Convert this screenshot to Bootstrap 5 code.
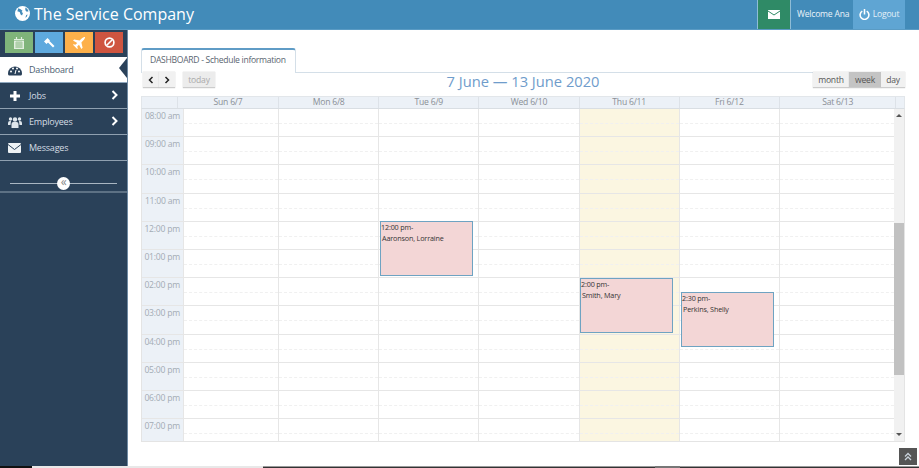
<!DOCTYPE html>
<html lang="en">
<head>
<meta charset="utf-8">
<title>The Service Company</title>
<link rel="stylesheet" href="https://cdn.jsdelivr.net/npm/bootstrap@5.3.0/dist/css/bootstrap.min.css">
<style>
html,body{height:100%;margin:0;overflow:hidden}
body{font-family:"Open Sans",sans-serif;background:#fff;color:#555;font-size:8.6px;letter-spacing:-.22px}
.shell{height:468px;position:relative}
.topbar{height:30px;background:#428bb9;border-bottom:1px solid #5a9bc4;color:#fff}
.brand{font-size:16px;line-height:29px;padding-left:15px;color:#fff;letter-spacing:0}
.brand svg{width:15px;height:15px;margin-right:4px;vertical-align:-1px}
.msgcell{width:34px;height:29px;background:#2f8a66;border-left:1px solid #8fbcd6;border-right:1px solid #8fbcd6}
.welcome{padding:0 6px;width:62px;white-space:nowrap;color:#eaf3f9}
.logout{width:52px;height:29px;background:#5fa5d3;gap:3px;color:#e4f0f8}
.endcell{width:14px}
.main{height:438px}
.side{width:128px;background:#2a4159;border-right:1px solid #6f8aa3;color:#dfe6ec;flex:none;height:436px}
.quick{height:27px;padding:2px 5px 0 5px;gap:2px}
.quick span{width:28px;height:21px;flex:none}
.q1{background:#7fb47a}.q2{background:#5ea9de}.q3{background:#fdb04a}.q4{background:#cf5540}
.mitem{height:26px;font-size:9px;border-bottom:1px solid #8fa0b0;padding:0 0 0 8px;position:relative;color:#d5dde4}
.mitem svg.ic{width:14px;height:14px;margin-right:7px;flex:none}
.mitem.on{background:#fff;color:#4a5d70;border-bottom:1px solid #8fa8bf}
.mitem.on::after{content:"";position:absolute;right:0;top:1px;border-style:solid;border-width:10px 8px 10px 0;border-color:transparent #2a4159 transparent transparent}
.chev{position:absolute;right:9px;top:7px;width:7px;height:10px}
.slidewrap{height:32px;border-bottom:2px solid #5d7184;position:relative}
.slidewrap i{position:absolute;left:10px;right:10px;top:22px;height:1px;background:#a9b6c2;display:block}
.knob{position:absolute;left:57px;top:16px;width:13px;height:13px;border-radius:50%;background:#fff;color:#888;font-size:12px;line-height:10px;text-align:center}
.work{flex:1;padding:18px 14px 0 13px;min-width:0}
.tabline{height:25px;border-bottom:1px solid #d4dfe8}
.tabhead{height:25px;width:155px;border:1px solid #d4dfe8;border-top:2px solid #5f9cc6;border-bottom:0;background:#fff;border-radius:3px 3px 0 0;line-height:21px;padding-left:8px;color:#5a6570;white-space:nowrap;position:relative;letter-spacing:-.3px}
.toolbar{height:24px;position:relative;margin:-1px 0 0 2px}
.fcbtn{height:16px;background:#f1f1f1;border:0;border-bottom:1px solid #ccc;box-shadow:0 0 1px #bbb;font-size:8.600px;letter-spacing:-.22px;color:#555;padding:0;line-height:14px;flex:none}
.fcbtn.arrow{width:16px}
.fcbtn.dis{color:#aaa;background:#ececec;width:32px;margin-left:8px}
.fcbtn.act{background:#c4c4c4}
.b-month{width:36px}.b-week{width:32px}.b-day{width:24px}
.fctitle{position:absolute;left:-2px;right:0;top:-1px;text-align:center;font-size:14.7px;line-height:20px;color:#6f9ccb;letter-spacing:0}
.fchead{height:13px;background:#ecf1f7;border:1px solid #e2e6ea;border-bottom:1px solid #d9dee3;color:#8a8f96;line-height:11px}
.fchead div{border-left:1px solid #dde2e8;text-align:center;width:100.2px;flex:none}
.fchead .hd0{width:35px;border-left:0}
.fchead .hd1{width:101px}
.fchead .hd7{width:116.500px}
.fchead .hdlast{width:auto;flex:1}
.fcbody{height:333px;overflow:hidden;position:relative;border:1px solid #e4e4e4;border-top:0}
.hourrow{display:flex;height:28.2px;border-bottom:1px solid #e6e6e6}
.axis{width:41px;flex:none;background:#ecf1f7;color:#a3abb4;text-align:right;padding-right:3px;line-height:14px;white-space:nowrap}
.cell{width:100.2px;flex:none;border-left:1px solid #e6e6e6;position:relative}
.cell.first{width:95px}
.cell::after{content:"";position:absolute;left:0;right:0;top:14px;border-top:1px dashed #f0f0f0}
.cell.today{background:#fbf6e1}
.cell.tail{width:auto;flex:1}
.evt{position:absolute;background:#f3d6d6;border:1px solid #6ea3c2;color:#333;font-size:7.200px;letter-spacing:-.15px;line-height:10px;padding:0;width:93px;height:55px;white-space:nowrap}
.evt span{display:block}
.evt span+span{padding:1px 0 0 1px}
.sbar{position:absolute;right:0;top:0;bottom:0;width:10px;background:#f1f1f1}
.sbar b{position:absolute;left:0;right:0;top:114px;height:152px;background:#c1c1c1}
.sbar u{position:absolute;left:2px;width:0;height:0;border-style:solid;border-color:transparent}
.sup{top:5px;border-width:0 3px 3px 3px;border-bottom-color:#555!important}
.sdn{bottom:5px;border-width:3px 3px 0 3px;border-top-color:#555!important}
.gotop{position:absolute;right:2px;bottom:3px;width:18px;height:17px;background:#555}
.strip{position:absolute;left:0;right:0;bottom:0;height:2px;background:#333;border-top:1px solid #999}
.seg-a{width:32px;background:#111}
.seg-b{width:231px;background:#e8e8e8}
.seg-c{width:392px}
.seg-d{width:25px;background:#777}
.strip div{height:2px;margin-top:-1px}
</style>
</head>
<body>
<div class="shell">
  <header class="topbar d-flex align-items-center justify-content-between">
    <div class="brand">
      <svg viewBox="0 0 16 16"><circle cx="8" cy="8" r="8" fill="#fff"/><path d="M3.500 2.500l2.500 1 2 1.500-1 1.500 1.500 1-1 2.500-1.500-1-1-2.500-2.500-1zM11 1.500l2 1.500 1.500 2.500-2 .5-1.500-1.500zM12 9.500l1.500-.5-1 2.500-1.500 1z" fill="#428bb9"/></svg>The Service Company
    </div>
    <div class="d-flex align-items-center">
      <div class="msgcell d-flex align-items-center justify-content-center">
        <svg width="12" height="9" viewBox="0 0 12 9"><rect width="12" height="9" fill="#fff"/><path d="M0 1l6 4 6-4" fill="none" stroke="#2f8a66" stroke-width="1"/></svg>
      </div>
      <div class="welcome">Welcome Ana</div>
      <div class="logout d-flex align-items-center justify-content-center">
        <svg width="11" height="11" viewBox="0 0 10 10"><path d="M3 2a4 4 0 1 0 4 0" fill="none" stroke="#fff" stroke-width="1.400"/><path d="M5 0v5" stroke="#fff" stroke-width="1.400"/></svg><span>Logout</span>
      </div>
      <div class="endcell"></div>
    </div>
  </header>
  <div class="main d-flex">
    <nav class="side">
      <div class="quick d-flex">
        <span class="q1 d-flex align-items-center justify-content-center"><svg width="10" height="12" viewBox="0 0 10 12"><path d="M0 2h10v10H0z" fill="#e2efe0"/><path d="M2.500 0v3M7.500 0v3" stroke="#e2efe0" stroke-width="1.200"/><path d="M0 3.500h10M1 6h8M1 8h8M1 10h8M3 4v7M5 4v7M7 4v7" stroke="#7fb47a" stroke-width=".6"/></svg></span>
        <span class="q2 d-flex align-items-center justify-content-center"><svg width="12" height="12" viewBox="0 0 12 12"><path d="M1 4.500l3.500-3.500 2.500 2.500L3.500 7zM5 5.500l1.500-1.500 5 5-1.500 1.500z" fill="#fff"/></svg></span>
        <span class="q3 d-flex align-items-center justify-content-center"><svg width="12" height="12" viewBox="0 0 10 10"><path d="M10 0c-1 0-2 .5-3 1.500L5.500 3 1 2 0 3l3.500 2L2 6.500 .5 6 0 6.500 1.500 8 3.500 10 4 9.500 3.500 8 5 6.500 7 10l1-1-1-4.500L8.500 3C9.500 2 10 1 10 0z" fill="#fff"/></svg></span>
        <span class="q4 d-flex align-items-center justify-content-center"><svg width="11" height="11" viewBox="0 0 10 10"><circle cx="5" cy="5" r="4" fill="none" stroke="#fff" stroke-width="1.500"/><path d="M2.500 7.500l5-5" stroke="#fff" stroke-width="1.500"/></svg></span>
      </div>
      <div class="mitem on d-flex align-items-center">
        <svg class="ic" viewBox="0 0 14 14"><path d="M0 10.500a7 7 0 0 1 14 0c0 1-.5 2-1 2H1c-.5 0-1-1-1-2z" fill="#2a4159"/><circle cx="3" cy="8.500" r="1" fill="#fff"/><circle cx="5" cy="5.500" r="1" fill="#fff"/><circle cx="9" cy="5.500" r="1" fill="#fff"/><circle cx="11" cy="8.500" r="1" fill="#fff"/><path d="M7 11l1-4" stroke="#fff"/></svg>Dashboard
      </div>
      <div class="mitem d-flex align-items-center">
        <svg class="ic" viewBox="0 0 14 14"><path d="M5.500 2h3v3.500H12v3H8.500V12h-3V8.500H2v-3h3.500z" fill="#fff"/></svg>Jobs
        <svg class="chev" viewBox="0 0 7 10"><path d="M1.500 1l4 4-4 4" fill="none" stroke="#fff" stroke-width="2"/></svg>
      </div>
      <div class="mitem d-flex align-items-center">
        <svg class="ic" viewBox="0 0 14 14"><circle cx="7" cy="4.500" r="2.200" fill="#dfe6ec"/><circle cx="2.500" cy="4" r="1.700" fill="#dfe6ec"/><circle cx="11.500" cy="4" r="1.700" fill="#dfe6ec"/><path d="M3.500 13V9a2 2 0 0 1 2-2h3a2 2 0 0 1 2 2v4zM0 10V8a2 2 0 0 1 2-2h1L2.500 10zM14 10V8a2 2 0 0 0-2-2h-1l.5 4z" fill="#dfe6ec"/></svg>Employees
        <svg class="chev" viewBox="0 0 7 10"><path d="M1.500 1l4 4-4 4" fill="none" stroke="#fff" stroke-width="2"/></svg>
      </div>
      <div class="mitem d-flex align-items-center">
        <svg class="ic" viewBox="0 0 14 14"><rect y="2" width="13" height="10" fill="#eef2f5" rx="1"/><path d="M0 3.500l6.500 5 6.500-5" fill="none" stroke="#2a4159"/></svg>Messages
      </div>
      <div class="slidewrap"><i></i><div class="knob">«</div></div>
    </nav>
    <main class="work">
      <div class="tabline"><div class="tabhead">DASHBOARD - Schedule information</div></div>
      <div class="toolbar d-flex align-items-start justify-content-between pt-0">
        <div class="d-flex">
          <button class="fcbtn arrow"><svg width="6" height="8" viewBox="0 0 6 8"><path d="M4.500 1l-3 3 3 3" fill="none" stroke="#222" stroke-width="1.500"/></svg></button>
          <button class="fcbtn arrow"><svg width="6" height="8" viewBox="0 0 6 8"><path d="M1.500 1l3 3-3 3" fill="none" stroke="#222" stroke-width="1.500"/></svg></button>
          <button class="fcbtn dis">today</button>
        </div>
        <div class="fctitle">7 June — 13 June 2020</div>
        <div class="d-flex position-relative">
          <button class="fcbtn b-month">month</button>
          <button class="fcbtn b-week act">week</button>
          <button class="fcbtn b-day">day</button>
        </div>
      </div>
      <div class="fchead d-flex">
        <div class="hd0"></div><div class="hd1">Sun 6/7</div><div>Mon 6/8</div><div>Tue 6/9</div><div>Wed 6/10</div><div>Thu 6/11</div><div>Fri 6/12</div><div class="hd7">Sat 6/13</div><div class="hdlast"></div>
      </div>
      <div class="fcbody">
        <div class="hourrow"><div class="axis">08:00 am</div><div class="cell first"></div><div class="cell"></div><div class="cell"></div><div class="cell"></div><div class="cell today"></div><div class="cell"></div><div class="cell tail"></div></div>
        <div class="hourrow"><div class="axis">09:00 am</div><div class="cell first"></div><div class="cell"></div><div class="cell"></div><div class="cell"></div><div class="cell today"></div><div class="cell"></div><div class="cell tail"></div></div>
        <div class="hourrow"><div class="axis">10:00 am</div><div class="cell first"></div><div class="cell"></div><div class="cell"></div><div class="cell"></div><div class="cell today"></div><div class="cell"></div><div class="cell tail"></div></div>
        <div class="hourrow"><div class="axis">11:00 am</div><div class="cell first"></div><div class="cell"></div><div class="cell"></div><div class="cell"></div><div class="cell today"></div><div class="cell"></div><div class="cell tail"></div></div>
        <div class="hourrow"><div class="axis">12:00 pm</div><div class="cell first"></div><div class="cell"></div><div class="cell"></div><div class="cell"></div><div class="cell today"></div><div class="cell"></div><div class="cell tail"></div></div>
        <div class="hourrow"><div class="axis">01:00 pm</div><div class="cell first"></div><div class="cell"></div><div class="cell"></div><div class="cell"></div><div class="cell today"></div><div class="cell"></div><div class="cell tail"></div></div>
        <div class="hourrow"><div class="axis">02:00 pm</div><div class="cell first"></div><div class="cell"></div><div class="cell"></div><div class="cell"></div><div class="cell today"></div><div class="cell"></div><div class="cell tail"></div></div>
        <div class="hourrow"><div class="axis">03:00 pm</div><div class="cell first"></div><div class="cell"></div><div class="cell"></div><div class="cell"></div><div class="cell today"></div><div class="cell"></div><div class="cell tail"></div></div>
        <div class="hourrow"><div class="axis">04:00 pm</div><div class="cell first"></div><div class="cell"></div><div class="cell"></div><div class="cell"></div><div class="cell today"></div><div class="cell"></div><div class="cell tail"></div></div>
        <div class="hourrow"><div class="axis">05:00 pm</div><div class="cell first"></div><div class="cell"></div><div class="cell"></div><div class="cell"></div><div class="cell today"></div><div class="cell"></div><div class="cell tail"></div></div>
        <div class="hourrow"><div class="axis">06:00 pm</div><div class="cell first"></div><div class="cell"></div><div class="cell"></div><div class="cell"></div><div class="cell today"></div><div class="cell"></div><div class="cell tail"></div></div>
        <div class="hourrow"><div class="axis">07:00 pm</div><div class="cell first"></div><div class="cell"></div><div class="cell"></div><div class="cell"></div><div class="cell today"></div><div class="cell"></div><div class="cell tail"></div></div>
        <div class="evt" style="left:238px;top:112px"><span>12:00 pm-</span><span>Aaronson, Lorraine</span></div>
        <div class="evt" style="left:438px;top:169px"><span>2:00 pm-</span><span>Smith, Mary</span></div>
        <div class="evt" style="left:539px;top:183px"><span>2:30 pm-</span><span>Perkins, Shelly</span></div>
        <div class="sbar"><u class="sup"></u><b></b><u class="sdn"></u></div>
      </div>
    </main>
  </div>
  <div class="gotop d-flex align-items-center justify-content-center"><svg width="8" height="9" viewBox="0 0 8 9"><path d="M1 4.500l3-3 3 3M1 8l3-3 3 3" fill="none" stroke="#c9d3dc" stroke-width="1.300"/></svg></div>
  <div class="strip d-flex"><div class="seg-a"></div><div class="seg-b"></div><div class="seg-c"></div><div class="seg-d"></div></div>
</div>
<script src="https://cdn.jsdelivr.net/npm/bootstrap@5.3.0/dist/js/bootstrap.bundle.min.js"></script>
</body>
</html>
